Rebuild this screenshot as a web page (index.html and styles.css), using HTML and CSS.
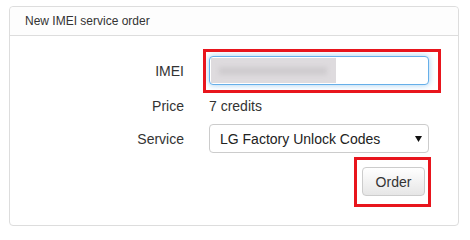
FILE: index.html
```html
<!DOCTYPE html>
<html>
<head>
<meta charset="utf-8">
<link rel="stylesheet" href="styles.css">
</head>
<body>
<div class="panel">
  <div class="panel-heading">New IMEI service order</div>
  <div class="panel-body">
    <div class="form">
      <div class="label">IMEI</div>
      <div class="control mark-wrap">
        <div class="input">
          <div class="blurred"><div class="blurred-text"></div></div>
        </div>
        <div class="mark mark-imei"></div>
      </div>

      <div class="label label-price">Price</div>
      <div class="value">7 credits</div>

      <div class="label">Service</div>
      <div class="select">
        <span>LG Factory Unlock Codes</span>
        <svg class="caret" width="7" height="6" viewBox="0 0 7 6"><path d="M0 0H7L3.5 6Z" fill="#111"/></svg>
      </div>

      <div class="actions">
        <div class="mark-wrap">
          <button class="btn">Order</button>
          <div class="mark mark-btn"></div>
        </div>
      </div>
    </div>
  </div>
</div>
</body>
</html>
```

FILE: styles.css
```css
* { box-sizing: border-box; }
html, body { margin: 0; padding: 0; background: #fff; }
body {
  font-family: "Liberation Sans", Arial, sans-serif;
  color: #333;
  width: 470px;
  height: 232px;
}
.panel {
  margin: 6px 11px 0 9px;
  height: 220px;
  border: 1px solid #dddddd;
  border-radius: 4px;
  background: #fff;
}
.panel-heading {
  height: 29px;
  line-height: 28px;
  padding: 0 15px;
  font-size: 12px;
  color: #333;
  border-bottom: 1px solid #dddddd;
  background: #fdfdfd;
  border-radius: 4px 4px 0 0;
}
.panel-body {
  padding-top: 20px;
}
.form {
  display: grid;
  grid-template-columns: 174px 220px;
  grid-template-rows: 29px 39px 29px auto;
  column-gap: 25px;
  font-size: 14px;
}
.label {
  text-align: right;
  align-self: center;
  color: #333;
}
.label-price, .value {
  padding-top: 3px;
}
.value {
  align-self: center;
  color: #333;
}
.mark-wrap { position: relative; }
.input {
  height: 29px;
  border: 1px solid #66afe9;
  border-radius: 4px;
  background: #fff;
  box-shadow: 0 0 6px rgba(102, 175, 233, 0.6);
  padding: 1px 0 0 1px;
  overflow: hidden;
}
.blurred {
  width: 125px;
  height: 25px;
  background: #dedbde;
  filter: blur(0.6px);
  display: flex;
  align-items: center;
  padding-left: 8px;
}
.blurred-text {
  width: 108px;
  height: 8px;
  background: #cfcccf;
  filter: blur(2px);
}
.select {
  height: 29px;
  border: 1px solid #cccccc;
  border-radius: 4px;
  background: #fff;
  display: flex;
  align-items: center;
  justify-content: space-between;
  padding: 0 6px 0 10px;
  color: #222;
}
.caret { display: block; }
.actions {
  grid-column: 2;
  display: flex;
  justify-content: flex-end;
  padding-right: 4px;
  margin-top: 14px;
}
.btn {
  width: 63px;
  height: 29px;
  font-family: "Liberation Sans", Arial, sans-serif;
  font-size: 14px;
  color: #333;
  border: 1px solid #cccccc;
  border-radius: 4px;
  background: linear-gradient(to bottom, #ffffff 0%, #e6e6e6 100%);
  padding: 0;
  display: block;
}
.mark {
  position: absolute;
  border: 3px solid #e8151d;
}
.mark-imei {
  left: -6px;
  right: -12px;
  top: -7px;
  bottom: -8px;
}
.mark-btn {
  left: -8px;
  right: -6px;
  top: -10px;
  bottom: -11px;
}
```
